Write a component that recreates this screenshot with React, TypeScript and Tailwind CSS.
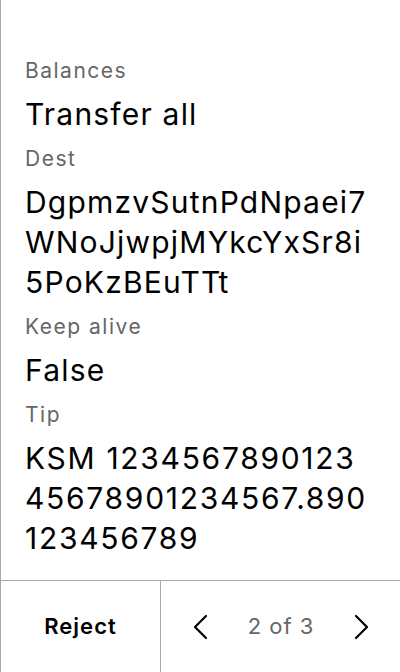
import React from "react";

function Chevron({ dir }: { dir: "left" | "right" }) {
  return (
    <svg width="16" height="26" viewBox="0 0 16 26" fill="none" stroke="#000" strokeWidth="2.2" strokeLinecap="round" strokeLinejoin="round">
      {dir === "left" ? <polyline points="14,2 3,13 14,24" /> : <polyline points="2,2 13,13 2,24" />}
    </svg>
  );
}

function Field({ label, value, numeric }: { label: string; value: string; numeric?: boolean }) {
  return (
    <div className="flex flex-col gap-[8px]">
      <div className="text-[21px] leading-[30px] tracking-[1.5px] text-[#666666]">{label}</div>
      <div
        className={
          numeric
            ? "text-[30px] leading-[40px] tracking-[1.7px] text-black break-all"
            : "text-[30px] leading-[40px] tracking-[1.2px] text-black break-all"
        }
      >
        {value}
      </div>
    </div>
  );
}

export default function App() {
  return (
    <div
      className="h-[672px] w-[400px] flex flex-col bg-white border-l border-[#a8a8a8]"
      style={{ fontFamily: "Inter, 'Noto Sans', sans-serif" }}
    >
      <div className="flex-1 flex flex-col gap-[10px] pt-[56px] pl-[24px] pr-[27px]">
        <Field label="Balances" value="Transfer all" />
        <Field label="Dest" value="DgpmzvSutnPdNpaei7WNoJjwpjMYkcYxSr8i5PoKzBEuTTt" />
        <Field label="Keep alive" value="False" />
        <Field label="Tip" value="KSM 123456789012345678901234567.890123456789" numeric />
      </div>
      <div className="h-[92px] flex border-t border-[#a8a8a8]">
        <div className="w-[160px] flex items-center justify-center border-r border-[#a8a8a8]">
          <span className="text-[22px] font-semibold tracking-[1px] text-black">Reject</span>
        </div>
        <div className="flex-1 flex items-center justify-between pl-[31px] pr-[30px]">
          <Chevron dir="left" />
          <span className="text-[22px] tracking-[1px] text-[#666666]">2 of 3</span>
          <Chevron dir="right" />
        </div>
      </div>
    </div>
  );
}
